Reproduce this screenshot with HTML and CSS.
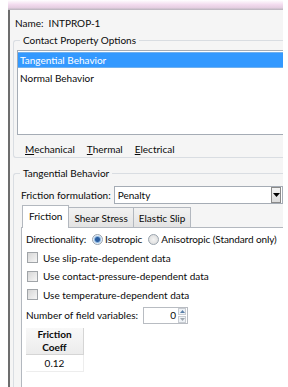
FILE: index.html
```html
<!DOCTYPE html>
<html lang="en">
<head>
    <meta charset="UTF-8">
    <title>Edit Contact Property</title>
    <link rel="stylesheet" href="styles.css">
</head>
<body>
    <div class="titlebar"></div>
    <div class="dialog">
        <div class="name-row">Name:&nbsp; INTPROP-1</div>

        <div class="group options">
            <div class="group-label">Contact Property Options</div>
            <div class="listbox">
                <div class="list-item selected">Tangential Behavior</div>
                <div class="list-item">Normal Behavior</div>
            </div>
            <div class="menu-row">
                <span><u>M</u>echanical</span>
                <span><u>T</u>hermal</span>
                <span><u>E</u>lectrical</span>
            </div>
        </div>

        <div class="group behavior">
            <div class="group-label">Tangential Behavior</div>
            <div class="formulation">
                <span>Friction formulation:</span>
                <div class="combo">
                    <span>Penalty</span>
                    <div class="combo-btn">
                        <svg width="7" height="5" viewBox="0 0 7 5"><path d="M0 0h7L3.5 4z" fill="#000"/></svg>
                    </div>
                </div>
            </div>

            <div class="tabs">
                <div class="tab active">Friction</div>
                <div class="tab">Shear Stress</div>
                <div class="tab">Elastic Slip</div>
            </div>
            <div class="tab-panel">
                <div class="row direction">
                    <span>Directionality:</span>
                    <span class="radio on"></span><span>Isotropic</span>
                    <span class="radio"></span><span>Anisotropic (Standard only)</span>
                </div>
                <div class="row"><span class="check"></span>Use slip-rate-dependent data</div>
                <div class="row"><span class="check"></span>Use contact-pressure-dependent data</div>
                <div class="row"><span class="check"></span>Use temperature-dependent data</div>
                <div class="row field-row">
                    <span>Number of field variables:</span>
                    <div class="spin">
                        <span class="spin-val">0</span>
                        <div class="spin-btns">
                            <div class="spin-btn"><svg width="5" height="3" viewBox="0 0 5 3"><path d="M0 3h5L2.5 0z" fill="#5a7fa8"/></svg></div>
                            <div class="spin-btn"><svg width="5" height="3" viewBox="0 0 5 3"><path d="M0 0h5L2.5 3z" fill="#a0a8b0"/></svg></div>
                        </div>
                    </div>
                </div>
                <div class="table">
                    <div class="th">Friction<br>Coeff</div>
                    <div class="td">0.12</div>
                </div>
            </div>
        </div>
    </div>
</body>
</html>
```
FILE: styles.css
```css
body {
    margin: 0;
    background-color: #fff;
    font-family: Lato, 'Noto Sans', sans-serif;
    font-size: 10px;
    color: #0a0a0a;
    overflow: hidden;
}
.titlebar {
    height: 10px;
    background: linear-gradient(to bottom, #fff 0%, #f3dcef 45%, #e6cfe2 75%, #b8b4bc 100%);
    margin-left: 8px;
    width: 275px;
}
.dialog {
    margin-left: 8px;
    width: 275px;
    height: 377px;
    border-left: 2px solid #6d6d6d;
    background-color: #f5f5f5;
    box-sizing: border-box;
    padding: 5px 0 0 3px;
    overflow: hidden;
    white-space: nowrap;
}
.name-row {
    height: 16px;
    line-height: 16px;
    padding-left: 2px;
}
.group {
    border: 1px solid #d9dde2;
    border-right: none;
    border-radius: 3px 0 0 3px;
    margin-top: 9px;
    position: relative;
}
.group-label {
    position: absolute;
    top: -9px;
    left: 6px;
    padding: 0 3px;
    background-color: #f5f5f5;
    line-height: 16px;
}
.options {
    padding: 9px 0 0 3px;
    height: 107px;
}
.listbox {
    background-color: #fff;
    border: 1px solid #a5acb5;
    border-right: none;
    height: 82px;
    padding-top: 1px;
}
.list-item {
    height: 16px;
    line-height: 16px;
    padding-left: 2px;
}
.list-item.selected {
    background-color: #3399ff;
    color: #fff;
    border-top: 1px solid #6fb0ef;
    border-bottom: 1px solid #6fb0ef;
    height: 14px;
    line-height: 14px;
    margin-bottom: 2px;
}
.menu-row {
    display: flex;
    gap: 12px;
    padding: 6px 0 0 8px;
    line-height: 16px;
}
.behavior {
    margin-top: 15px;
    padding: 12px 0 0 7px;
    height: 220px;
}
.formulation {
    display: flex;
    align-items: center;
    gap: 3px;
}
.combo {
    flex: 1;
    display: flex;
    align-items: center;
    justify-content: space-between;
    height: 16px;
    border: 1px solid #a5acb5;
    background-color: #fff;
    padding-left: 3px;
}
.combo-btn {
    width: 8px;
    height: 14px;
    border: 1px solid #8a8a8a;
    background: linear-gradient(#f4f4f4, #dcdcdc);
    display: flex;
    align-items: center;
    justify-content: center;
    margin-right: 1px;
}
.tabs {
    display: flex;
    margin-top: 1px;
    padding-left: 1px;
    align-items: flex-end;
    height: 22px;
}
.tab {
    border: 1px solid #b3b8bf;
    border-bottom: none;
    background: linear-gradient(#f2f2f2, #e3e3e3);
    padding: 0 5px;
    height: 19px;
    line-height: 20px;
    margin-right: -1px;
}
.tab.active {
    background: #fff;
    padding: 0 6px;
    height: 22px;
    line-height: 20px;
    position: relative;
    z-index: 1;
    margin-bottom: -1px;
}
.tab-panel {
    border: 1px solid #b3b8bf;
    border-right: none;
    background-color: #fff;
    padding: 2px 0 0 4px;
    height: 170px;
}
.row {
    display: flex;
    align-items: center;
    height: 18.5px;
    gap: 3px;
}
.direction {
    letter-spacing: -0.1px;
    gap: 2px;
}
.radio {
    flex-shrink: 0;
    width: 9px;
    height: 9px;
    border-radius: 50%;
    border: 1px solid #9aa4ae;
    background: radial-gradient(#f4f4f4, #d8d8d8);
    margin-left: 4px;
}
.radio.on {
    background: radial-gradient(#2a5ea0 0 2px, #8fb7e0 3px, #e4eef8 4px);
}
.check {
    flex-shrink: 0;
    width: 9px;
    height: 9px;
    border: 1px solid #a0a4a8;
    background: linear-gradient(135deg, #d6d6d6, #f6f6f6);
    margin: 0 2px 0 1px;
}
.field-row {
    margin-top: 1px;
    height: 20px;
}
.spin {
    display: flex;
    align-items: center;
    width: 43px;
    height: 15px;
    border: 1px solid #b8bcc2;
    background-color: #fff;
    margin-left: 2px;
}
.spin-val {
    flex: 1;
    text-align: right;
    padding-right: 2px;
}
.spin-btns {
    display: flex;
    flex-direction: column;
    gap: 1px;
    margin-right: 1px;
}
.spin-btn {
    width: 6px;
    height: 5px;
    border: 1px solid #c8ccd2;
    background-color: #eef2f6;
    display: flex;
    align-items: center;
    justify-content: center;
}
.table {
    margin-top: 3px;
    width: 58px;
}
.th {
    font-weight: bold;
    text-align: center;
    line-height: 13px;
    background: linear-gradient(#f8f8f8, #ececec);
    border-right: 1px solid #d5d5d5;
    border-bottom: 1px solid #d5d5d5;
}
.td {
    text-align: center;
    height: 16px;
    line-height: 16px;
    border-right: 1px solid #ededed;
    border-bottom: 1px solid #ededed;
}
```
